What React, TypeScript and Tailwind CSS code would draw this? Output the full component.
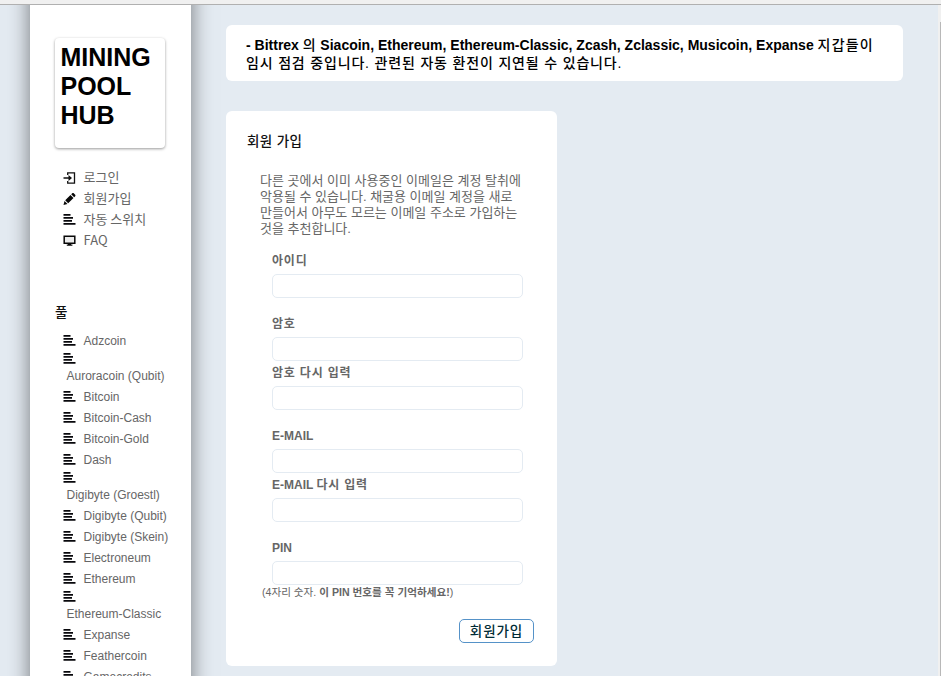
import type { ReactNode } from "react";

const pools: [string, boolean?][] = [
  ["Adzcoin"],
  ["Auroracoin (Qubit)", true],
  ["Bitcoin"],
  ["Bitcoin-Cash"],
  ["Bitcoin-Gold"],
  ["Dash"],
  ["Digibyte (Groestl)", true],
  ["Digibyte (Qubit)"],
  ["Digibyte (Skein)"],
  ["Electroneum"],
  ["Ethereum"],
  ["Ethereum-Classic", true],
  ["Expanse"],
  ["Feathercoin"],
  ["Gamecredits"],
];

function BarsIcon() {
  return (
    <svg width="13" height="12" viewBox="0 0 13 12" className="block shrink-0">
      <path d="M0.5 0h7v1.7H0.5zM0.5 3h9.5v1.7H0.5zM0.5 6h8.5v1.7H0.5zM0.5 9h12v1.8H0.5z" fill="#08080c" />
    </svg>
  );
}

function LoginIcon() {
  return (
    <svg width="13" height="12" viewBox="0 0 13 12" className="block shrink-0">
      <path d="M4.7 3V.8h6.8v10.4H4.7V9" fill="none" stroke="#111" strokeWidth="1.3" />
      <path d="M.5 5.2h5V3L9 6 5.5 9V6.8h-5z" fill="#111" />
    </svg>
  );
}

function PencilIcon() {
  return (
    <svg width="13" height="12" viewBox="0 0 13 12" className="block shrink-0">
      <path d="M.5 12l1-4 3 3zM2.2 7.2L7.5 2l3 3-5.3 5.3zM8.2 1.3L9.5 0h1L12.4 2v1l-1.2 1.3z" fill="#080808" />
    </svg>
  );
}

function ScreenIcon() {
  return (
    <svg width="13" height="12" viewBox="0 0 13 12" className="block shrink-0">
      <path d="M1.2 1.2h10.6v7H1.2z" fill="#ececec" stroke="#080808" strokeWidth="1.5" />
      <path d="M5 8.6h3v1h1.4v1.2H3.8V9.6H5z" fill="#080808" />
    </svg>
  );
}

function NavRow({ icon, children }: { icon: ReactNode; children: ReactNode }) {
  return (
    <li className="flex h-[21px] items-center gap-[7.5px] whitespace-nowrap font-['Noto_Sans_CJK_KR',sans-serif] text-[13px] leading-[21px] text-[#666]">
      {icon}
      <span className="-mt-[2px]">{children}</span>
    </li>
  );
}

function Field({ label, korean, className }: { label?: string; korean?: string; className: string }) {
  return (
    <div className={className}>
      <label className="block h-5 whitespace-pre text-[12px] font-bold leading-[15px] text-[#666]">
        {label}
        {korean && <span className="text-[12px] tracking-[0.8px]">{korean}</span>}
      </label>
      <input className="block h-6 w-[251px] rounded-[5px] border border-[#e4ebf2] bg-white outline-none" />
    </div>
  );
}

export default function App() {
  return (
    <div className="flex h-[676px] w-[941px] flex-col overflow-hidden bg-[#e4ebf2] font-['Liberation_Sans','Noto_Sans_CJK_KR',sans-serif]">
      <div className="h-[5px] shrink-0 border-b border-[#b0b0b0] bg-[#f0f0f0]" />
      <div className="flex min-h-0 flex-1 overflow-hidden">
        <aside className="-mb-10 -mt-10 ml-[30px] w-[161px] shrink-0 bg-white pt-[73px] shadow-[0_0_20px_rgba(0,0,0,0.5)]">
          <h1 className="ml-[25px] h-[110px] w-[110px] rounded-[4px] pl-[5.5px] pt-[5px] text-[25px] font-bold leading-[29px] text-black shadow-[0_1px_3px_rgba(0,0,0,0.4)]">
            <span className="block">MINING</span>
            <span className="block">POOL</span>
            <span className="block">HUB</span>
          </h1>
          <ul className="ml-[33px] mt-[19px]">
            <NavRow icon={<LoginIcon />}>로그인</NavRow>
            <NavRow icon={<PencilIcon />}>회원가입</NavRow>
            <NavRow icon={<BarsIcon />}>자동 스위치</NavRow>
            <NavRow icon={<ScreenIcon />}>FAQ</NavRow>
          </ul>
          <h2 className="ml-[25px] mt-[52px] h-5 text-[13.5px] font-medium leading-5 text-[#111]">풀</h2>
          <ul className="ml-[33px] mt-[8px] text-[12px] text-[#666]">
            {pools.map(([name, wraps]) =>
              wraps ? (
                <li key={name} className="h-[35px] whitespace-nowrap pt-[1px]">
                  <BarsIcon />
                  <span className="block pl-[3.5px] pt-[1px] leading-[21px]">{name}</span>
                </li>
              ) : (
                <li key={name} className="flex h-[21px] gap-[7.5px] whitespace-nowrap pt-1 leading-[13px]">
                  <BarsIcon />
                  <span>{name}</span>
                </li>
              ),
            )}
          </ul>
        </aside>
        <main className="flex-1 pl-[35px] pt-5">
          <section className="h-14 w-[677px] whitespace-nowrap rounded-[6px] bg-white pl-[20px] pt-[12px] text-[14px] font-bold leading-[17px] text-black">
            <p className="h-[17px]">
              - Bittrex <span className="font-medium tracking-[0.8px]">의</span> Siacoin, Ethereum, Ethereum-Classic, Zcash, Zclassic, Musicoin, Expanse{" "}
              <span className="font-medium tracking-[1.2px]">지갑들이</span>
            </p>
            <p className="font-medium leading-[18px] tracking-[0.83px]">임시 점검 중입니다. 관련된 자동 환전이 지연될 수 있습니다.</p>
          </section>
          <section className="mt-[30px] h-[555px] w-[331px] rounded-[6px] bg-white pt-[21px]">
            <h2 className="ml-[21px] h-5 text-[13.5px] font-medium leading-5 tracking-[0.4px] text-[#111]">회원 가입</h2>
            <p className="ml-[34px] mt-[21px] whitespace-nowrap text-[13px] leading-[16px] text-[#666]">
              <span className="block">다른 곳에서 이미 사용중인 이메일은 계정 탈취에</span>
              <span className="block">악용될 수 있습니다. 채굴용 이메일 계정을 새로</span>
              <span className="block">만들어서 아무도 모르는 이메일 주소로 가입하는</span>
              <span className="block">것을 추천합니다.</span>
            </p>
            <form className="pl-[46px]">
              <Field korean="아이디" className="mt-[17px]" />
              <Field korean="암호" className="mt-[19px]" />
              <Field korean="암호 다시 입력" className="mt-[5px]" />
              <Field label="E-MAIL" className="mt-[19px]" />
              <Field label="E-MAIL " korean="다시 입력" className="mt-[5px]" />
              <Field label="PIN" className="mt-[19px]" />
              <p className="-ml-[10px] h-4 whitespace-nowrap text-[10.6px] leading-[15px] text-[#666]">
                (4자리 숫자. <b>이 PIN 번호를 꼭 기억하세요!</b>)
              </p>
              <button
                type="button"
                className="ml-[187px] mt-[18px] block h-6 w-[75px] whitespace-nowrap rounded-[5px] border border-[#5592c8] bg-white pt-px text-[13.5px] font-medium leading-[21px] tracking-[0.9px] text-[#002b36]"
              >
                회원가입
              </button>
            </form>
          </section>
        </main>
        <div className="w-[3px] shrink-0 bg-[#f0f0f0] pl-[2px] pt-[17px]">
          <div className="h-full w-px bg-[#b8b8b8]" />
        </div>
      </div>
    </div>
  );
}
